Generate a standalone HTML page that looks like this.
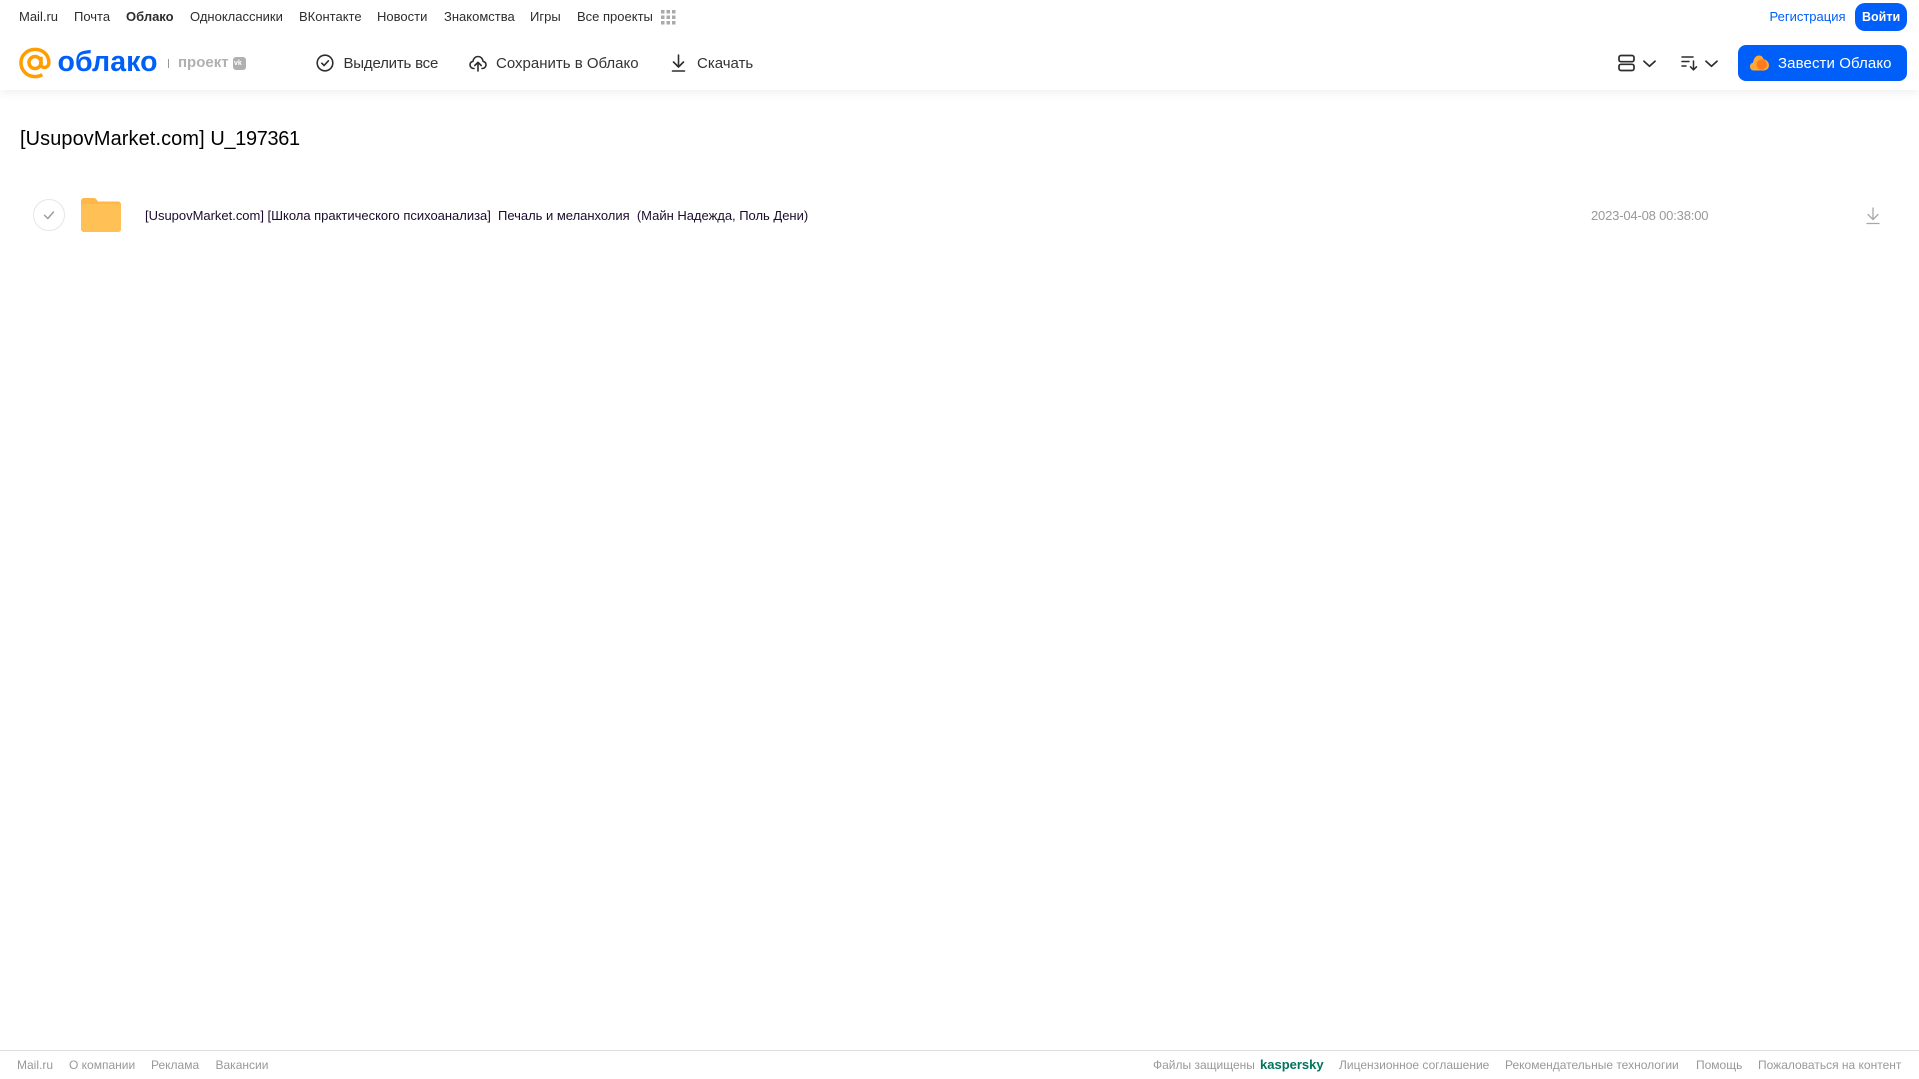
<!DOCTYPE html>
<html lang="ru">
<head>
<meta charset="utf-8">
<title>Облако</title>
<style>
html,body{margin:0;padding:0;width:1919px;height:1079px;overflow:hidden;background:#fff;font-family:"Liberation Sans",sans-serif;}
.t{position:absolute;white-space:nowrap;line-height:18px;}
.n{top:8px;font-size:13px;color:#2c2d2e;}
.b{top:55px;font-size:15px;color:#333;}
.f{top:1056px;font-size:12px;color:#999;}
svg{position:absolute;overflow:visible;}
#hdr{position:absolute;left:0;top:0;width:1919px;height:90px;background:#fff;box-shadow:0 2px 10px rgba(0,0,0,.07);}
</style>
</head>
<body>
<div id="hdr"></div>

<span class="t n" style="left:19px">Mail.ru</span>
<span class="t n" style="left:74px">Почта</span>
<span class="t n" style="left:126px;font-weight:bold">Облако</span>
<span class="t n" style="left:190px">Одноклассники</span>
<span class="t n" style="left:299px">ВКонтакте</span>
<span class="t n" style="left:377px">Новости</span>
<span class="t n" style="left:444px">Знакомства</span>
<span class="t n" style="left:530px">Игры</span>
<span class="t n" style="left:577px">Все проекты</span>
<svg style="left:661px;top:10px" width="15" height="15" fill="#aaa">
<rect x="0" y="0" width="3.5" height="3.5"/><rect x="5.5" y="0" width="3.5" height="3.5"/><rect x="11" y="0" width="3.5" height="3.5"/>
<rect x="0" y="5.5" width="3.5" height="3.5"/><rect x="5.5" y="5.5" width="3.5" height="3.5"/><rect x="11" y="5.5" width="3.5" height="3.5"/>
<rect x="0" y="11" width="3.5" height="3.5"/><rect x="5.5" y="11" width="3.5" height="3.5"/><rect x="11" y="11" width="3.5" height="3.5"/>
</svg>

<span class="t n" style="left:1769.5px;color:#005ff9">Регистрация</span>
<div style="position:absolute;left:1855px;top:3px;width:52px;height:28px;border-radius:10px;background:#005ff9"></div>
<span class="t n" style="left:1862px;color:#fff;font-weight:bold;font-size:12.5px">Войти</span>

<!-- logo -->
<svg style="left:19px;top:47px" width="32" height="32" viewBox="0 0 33 32" fill="none" stroke="#ff9e00" stroke-width="3.6">
<circle cx="16.5" cy="15.5" r="6.2"/>
<path d="M22.7 9.5V17.5C22.7 22 30.8 22 30.8 15.5C30.8 7.5 24.5 2 16.5 2C8.5 2 2 8 2 15.8C2 23.8 8.5 30 16.5 30C19.5 30 22 29.3 24 28"/>
</svg>
<span class="t" style="left:57.5px;top:41.5px;line-height:40px;font-size:28.5px;font-weight:bold;color:#005ff9;letter-spacing:.1px">облако</span>
<div style="position:absolute;left:168px;top:59px;width:1px;height:9px;background:#999"></div>
<span class="t" style="left:178px;top:54px;font-size:15px;font-weight:bold;color:#b0b0b0">проект</span>
<div style="position:absolute;left:233px;top:57px;width:13px;height:13px;border-radius:3px;background:#b0b0b0"></div>
<span class="t" style="left:234px;top:59px;line-height:9px;font-size:7px;font-weight:bold;color:#fff">vk</span>

<!-- toolbar -->
<svg style="left:316px;top:54px" width="18" height="18" viewBox="0 0 18 18" fill="none" stroke="#2c2d2e" stroke-width="1.6" stroke-linecap="round" stroke-linejoin="round">
<circle cx="9" cy="9" r="7.8"/><path d="M5.8 9.2L8.1 11.5L12.4 6.8"/>
</svg>
<span class="t b" style="left:343.5px;letter-spacing:-.2px">Выделить все</span>

<svg style="left:469px;top:54px" width="18" height="18" viewBox="0 0 18 18" fill="none" stroke="#2c2d2e" stroke-width="1.6" stroke-linecap="round" stroke-linejoin="round">
<path d="M5 14.5C2.5 14.5 1 12.8 1 10.8C1 9 2.2 7.7 3.9 7.4C4.3 4.4 6.5 2.5 9 2.5C11.6 2.5 13.7 4.4 14.1 7.4C15.8 7.7 17 9 17 10.8C17 12.8 15.5 14.5 13 14.5"/>
<path d="M9 17V8.5M5.8 11.5L9 8.3L12.2 11.5"/>
</svg>
<span class="t b" style="left:496px">Сохранить в Облако</span>

<svg style="left:671px;top:54px" width="15" height="18" viewBox="0 0 15 18" fill="none" stroke="#2c2d2e" stroke-width="1.6" stroke-linecap="round" stroke-linejoin="round">
<path d="M7.5 1V12.5M2.5 8L7.5 13L12.5 8M1.5 17H13.5"/>
</svg>
<span class="t b" style="left:697px">Скачать</span>

<!-- right toolbar -->
<svg style="left:1618px;top:54px" width="17" height="18" viewBox="0 0 17 18" fill="none" stroke="#2c2d2e" stroke-width="1.7">
<rect x="1" y="1.5" width="15" height="6.2" rx="2"/><rect x="1" y="10.3" width="15" height="6.2" rx="2"/>
</svg>
<svg style="left:1643px;top:60px" width="13" height="8" viewBox="0 0 13 8" fill="none" stroke="#2c2d2e" stroke-width="1.7" stroke-linecap="round" stroke-linejoin="round">
<path d="M1 1.2L6.5 6.2L12 1.2"/>
</svg>
<svg style="left:1681px;top:55px" width="17" height="16" viewBox="0 0 17 16" fill="none" stroke="#2c2d2e" stroke-width="1.5" stroke-linecap="round" stroke-linejoin="round">
<path d="M1 2H12M1 6.5H8M1 11H5M12.5 6V14.5M9.5 11.8L12.5 14.8L15.5 11.8"/>
</svg>
<svg style="left:1705px;top:60px" width="13" height="8" viewBox="0 0 13 8" fill="none" stroke="#2c2d2e" stroke-width="1.7" stroke-linecap="round" stroke-linejoin="round">
<path d="M1 1.2L6.5 6.2L12 1.2"/>
</svg>

<div style="position:absolute;left:1738px;top:45px;width:169px;height:36px;border-radius:8px;background:#005ff9"></div>
<svg style="left:1750px;top:55px" width="19" height="16" viewBox="0 0 19 16">
<path d="M4 15.5C1.5 15.5 0 13.8 0 11.5C0 9.5 1.3 8 3 7.6C3.6 3.5 5.8 .5 9 .5C11.5 .5 13 2.2 13.6 4.2C16.5 4.6 19 7.2 19 10.3C19 13.3 16.7 15.5 13.8 15.5Z" fill="#ffa930"/>
<circle cx="11.6" cy="9.6" r="5.2" fill="#ff7a1f"/>
</svg>
<span class="t b" style="left:1778px;color:#fff;letter-spacing:.1px">Завести Облако</span>

<!-- title -->
<span class="t" style="left:20px;top:126px;line-height:26px;font-size:19.9px;color:#000"><span style="letter-spacing:.13px">[UsupovMarket.com] </span><span style="letter-spacing:-.3px">U_197361</span></span>

<!-- row -->
<svg style="left:33px;top:199px" width="32" height="32" viewBox="0 0 32 32" fill="none">
<circle cx="16" cy="16" r="15.5" stroke="#e6e6e6"/>
<path d="M11.5 16.3L14.8 19.5L20.5 13" stroke="#999" stroke-width="1.4" stroke-linecap="round" stroke-linejoin="round"/>
</svg>
<svg style="left:81px;top:198px" width="40" height="34" viewBox="0 0 40 34">
<path d="M0 3C0 1.3 1.3 0 3 0H12.5C14 0 14.8 .6 15.6 1.6L17 3.5H37C38.7 3.5 40 4.8 40 6.5V31C40 32.7 38.7 34 37 34H3C1.3 34 0 32.7 0 31Z" fill="#ffb74a"/>
<path d="M0 8.8C0 7.3 1.3 6 3 6H37C38.7 6 40 7.3 40 8.8V31C40 32.7 38.7 34 37 34H3C1.3 34 0 32.7 0 31Z" fill="#ffc156"/>
</svg>
<span class="t" style="left:145px;top:207px;font-size:13px;letter-spacing:-.015px;color:#1c0c2c">[UsupovMarket.com] [Школа практического психоанализа]&nbsp; Печаль и меланхолия&nbsp; (Майн Надежда, Поль Дени)</span>
<span class="t" style="left:1591px;top:207px;font-size:13px;letter-spacing:-.18px;color:#999">2023-04-08 00:38:00</span>
<svg style="left:1866px;top:207px" width="14" height="18" viewBox="0 0 14 18" fill="none" stroke="#a8a8a8" stroke-width="1.3" stroke-linecap="round" stroke-linejoin="round">
<path d="M7 1V12M2 7.5L7 12.5L12 7.5M1 16.5H13"/>
</svg>

<!-- footer -->
<div style="position:absolute;left:0;top:1050px;width:1919px;height:1px;background:#ddd"></div>
<span class="t f" style="left:17px">Mail.ru</span>
<span class="t f" style="left:69px">О компании</span>
<span class="t f" style="left:151px">Реклама</span>
<span class="t f" style="left:215.5px">Вакансии</span>
<span class="t f" style="left:1153px">Файлы защищены</span>
<span class="t f" style="left:1260px;font-weight:bold;font-size:13px;color:#00745f">kaspersky</span>
<span class="t f" style="left:1339px">Лицензионное соглашение</span>
<span class="t f" style="left:1505px">Рекомендательные технологии</span>
<span class="t f" style="left:1696px">Помощь</span>
<span class="t f" style="left:1758px">Пожаловаться на контент</span>
</body>
</html>
